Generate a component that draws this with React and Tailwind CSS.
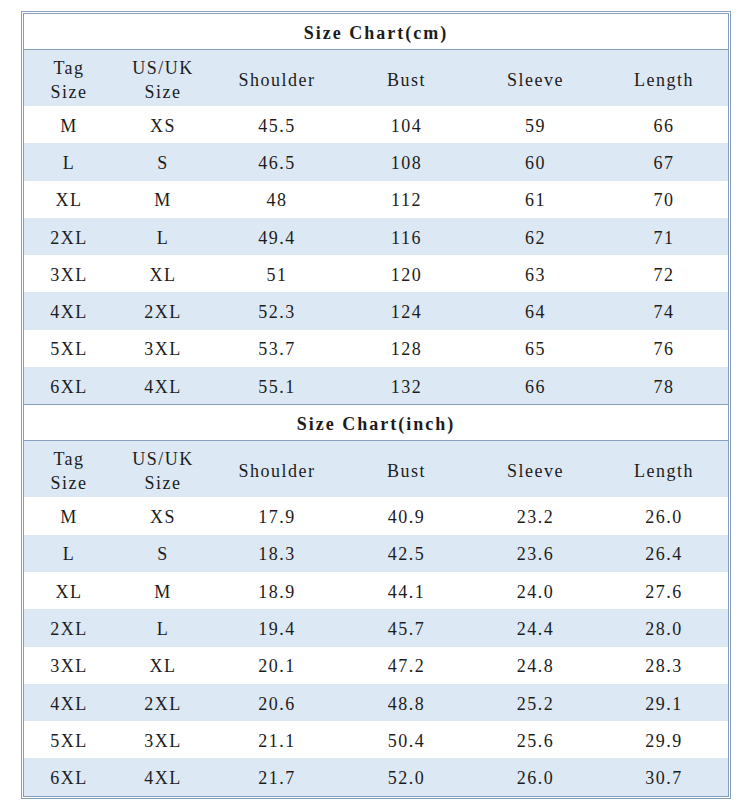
const cols = ["Tag\nSize", "US/UK\nSize", "Shoulder", "Bust", "Sleeve", "Length"];

const cmRows = [
  ["M", "XS", "45.5", "104", "59", "66"],
  ["L", "S", "46.5", "108", "60", "67"],
  ["XL", "M", "48", "112", "61", "70"],
  ["2XL", "L", "49.4", "116", "62", "71"],
  ["3XL", "XL", "51", "120", "63", "72"],
  ["4XL", "2XL", "52.3", "124", "64", "74"],
  ["5XL", "3XL", "53.7", "128", "65", "76"],
  ["6XL", "4XL", "55.1", "132", "66", "78"],
];

const inchRows = [
  ["M", "XS", "17.9", "40.9", "23.2", "26.0"],
  ["L", "S", "18.3", "42.5", "23.6", "26.4"],
  ["XL", "M", "18.9", "44.1", "24.0", "27.6"],
  ["2XL", "L", "19.4", "45.7", "24.4", "28.0"],
  ["3XL", "XL", "20.1", "47.2", "24.8", "28.3"],
  ["4XL", "2XL", "20.6", "48.8", "25.2", "29.1"],
  ["5XL", "3XL", "21.1", "50.4", "25.6", "29.9"],
  ["6XL", "4XL", "21.7", "52.0", "26.0", "30.7"],
];

const grid = "grid grid-cols-[90px_98px_130px_129px_129px_128px]";

const Section = ({ title, rows, first }) => (
  <div>
    <div
      className={`flex items-center justify-center pt-[3px] font-bold tracking-[2px] border-b border-[#86a0bc] ${
        first ? "h-[36px]" : "border-t h-[37px]"
      }`}
    >
      {title}
    </div>
    <div className={`${grid} h-[56px] pt-[3px] bg-[#dce8f4]`}>
      {cols.map((c) => (
        <div key={c} className="flex items-center justify-center text-center whitespace-pre-line leading-[24px]">
          {c}
        </div>
      ))}
    </div>
    {rows.map((r, i) => (
      <div key={i} className={`${grid} h-[37.3px] pt-[3px] ${i % 2 ? "bg-[#dce8f4]" : "bg-white"}`}>
        {r.map((v, j) => (
          <div key={j} className="flex items-center justify-center">
            {v}
          </div>
        ))}
      </div>
    ))}
  </div>
);

export default function App() {
  return (
    <div className="w-[747px] h-[811px] bg-white pt-[11px] pl-[21px] text-[18px] tracking-[1.5px] text-[#1c1c1c] font-['Liberation_Serif',serif]">
      <div className="w-[710px] border border-[#86a0bc] p-px">
        <div className="border border-[#86a0bc]">
          <Section title="Size Chart(cm)" rows={cmRows} first />
          <Section title="Size Chart(inch)" rows={inchRows} />
        </div>
      </div>
    </div>
  );
}
